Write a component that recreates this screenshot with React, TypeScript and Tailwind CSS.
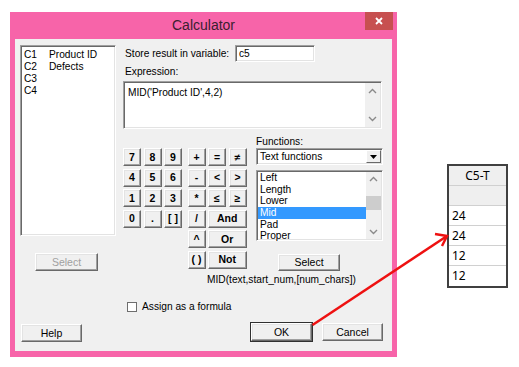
import React from "react";

const font = { fontFamily: '"Liberation Sans", Arial, sans-serif' };

function Btn({
  children,
  className = "",
  disabled = false,
}: {
  children?: React.ReactNode;
  className?: string;
  disabled?: boolean;
}) {
  return (
    <div
      className={
        "flex items-center justify-center bg-[#f0f0f0] border border-t-white border-l-white border-r-[#696969] border-b-[#696969] shadow-[inset_-1px_-1px_#a0a0a0,inset_1px_1px_#e3e3e3] text-[10.5px] leading-none whitespace-nowrap " +
        (disabled ? "text-[#a0a0a0] " : "text-black ") +
        className
      }
    >
      {children}
    </div>
  );
}

function Sunken({ className = "", children }: { className?: string; children?: React.ReactNode }) {
  return (
    <div
      className={
        "bg-white border border-t-[#a0a0a0] border-l-[#a0a0a0] border-r-white border-b-white shadow-[inset_1px_1px_#696969,inset_-1px_-1px_#e3e3e3] " +
        className
      }
    >
      {children}
    </div>
  );
}

function Chevron({ up }: { up?: boolean }) {
  return (
    <svg width="9" height="6" viewBox="0 0 9 6">
      <path
        d={up ? "M1 5 L4.5 1.5 L8 5" : "M1 1 L4.5 4.5 L8 1"}
        fill="none"
        stroke="#8a8a8a"
        strokeWidth="1.4"
      />
    </svg>
  );
}

export default function App() {
  const digits = ["7", "8", "9", "4", "5", "6", "1", "2", "3", "0", ".", "[ ]"];
  return (
    <div className="relative w-[519px] h-[367px] bg-white flex items-start overflow-hidden" style={font}>
      {/* Window */}
      <div className="ml-[10px] mt-[12px] w-[387px] h-[345px] bg-[#f764a9] flex flex-col">
        {/* Title bar */}
        <div className="h-[27px] flex items-start">
          <div className="w-[32px]" />
          <div className="flex-1 h-[27px] flex items-center justify-center text-[14px] text-[#3b2030]">
            Calculator
          </div>
          <div className="w-[28px] h-[18px] mr-[4px] bg-[#c75050] flex items-center justify-center">
            <svg width="8" height="8" viewBox="0 0 8 8">
              <path d="M1 1 L7 7 M7 1 L1 7" stroke="white" strokeWidth="1.8" />
            </svg>
          </div>
        </div>
        {/* Client */}
        <div className="mx-[5px] h-[312px] bg-[#f0f0f0] flex text-[10.2px] text-black whitespace-nowrap">
          {/* Left column */}
          <div className="ml-[5px] w-[96px] flex flex-col">
            <Sunken className="mt-[6px] h-[191px] pt-[3px] pl-[3px]">
              {[
                ["C1", "Product ID"],
                ["C2", "Defects"],
                ["C3", ""],
                ["C4", ""],
              ].map(([c, n]) => (
                <div key={c} className="flex h-[12px] leading-[12px]">
                  <span className="w-[25px]">{c}</span>
                  <span>{n}</span>
                </div>
              ))}
            </Sunken>
            <Btn disabled className="mt-[17px] ml-[15px] w-[63px] h-[18px]">
              Select
            </Btn>
            <Btn className="mt-[53px] ml-[1px] w-[61px] h-[18px]">Help</Btn>
          </div>

          {/* Right column */}
          <div className="ml-[7px] w-[262px] flex flex-col">
            <div className="mt-[6px] h-[17px] flex items-center">
              <div className="w-[112px] pl-[2px]">Store result in variable:</div>
              <Sunken className="w-[80px] h-[17px] pl-[3px] leading-[15px]">c5</Sunken>
            </div>
            <div className="mt-[3px] h-[14px] leading-[14px] pl-[2px]">Expression:</div>
            <Sunken className="mt-[2px] w-[259px] h-[48px] flex">
              <div className="flex-1 pl-[4px] pt-[4px] leading-[13px]">MID('Product ID',4,2)</div>
              <div className="w-[15px] mr-[1px] my-[1px] bg-[#f0f0f0] flex flex-col items-center justify-between py-[5px]">
                <Chevron up />
                <Chevron />
              </div>
            </Sunken>

            <div className="mt-[6px] flex">
              {/* Keypad */}
              <div className="w-[133px] pt-[13px] flex">
                <div className="grid grid-cols-[18px_18px_18px] gap-x-[2.5px] gap-y-[2.5px] auto-rows-[18px] content-start">
                  {digits.map((d) => (
                    <Btn key={d} className="w-[18px] h-[18px] font-bold text-[#222]">
                      {d}
                    </Btn>
                  ))}
                </div>
                <div className="ml-[5.5px] grid grid-cols-[18px_18px_18px] gap-x-[2.5px] gap-y-[2.5px] auto-rows-[18px] content-start">
                  <Btn className="font-bold">+</Btn>
                  <Btn className="font-bold">=</Btn>
                  <Btn className="font-bold">≠</Btn>
                  <Btn className="font-bold">-</Btn>
                  <Btn className="font-bold">&lt;</Btn>
                  <Btn className="font-bold">&gt;</Btn>
                  <Btn className="font-bold">*</Btn>
                  <Btn className="font-bold">≤</Btn>
                  <Btn className="font-bold">≥</Btn>
                  <Btn className="font-bold">/</Btn>
                  <Btn className="col-span-2 font-bold">And</Btn>
                  <Btn className="font-bold">^</Btn>
                  <Btn className="col-span-2 font-bold">Or</Btn>
                  <Btn className="font-bold">( )</Btn>
                  <Btn className="col-span-2 font-bold">Not</Btn>
                </div>
              </div>
              {/* Functions */}
              <div className="w-[127px] flex flex-col">
                <div className="h-[13px] leading-[13px]">Functions:</div>
                <Sunken className="h-[17px] flex items-center">
                  <div className="flex-1 pl-[3px] leading-[15px]">Text functions</div>
                  <div className="w-[15px] h-[13px] mr-[1px] flex items-center justify-center bg-[#f0f0f0] border border-t-white border-l-white border-r-[#696969] border-b-[#696969]">
                    <svg width="7" height="4" viewBox="0 0 7 4">
                      <path d="M0 0 L7 0 L3.5 4 Z" fill="black" />
                    </svg>
                  </div>
                </Sunken>
                <Sunken className="mt-[5px] h-[71px] flex">
                  <div className="flex-1 pt-[1px] pl-[1px]">
                    {["Left", "Length", "Lower", "Mid", "Pad", "Proper"].map((f) => (
                      <div
                        key={f}
                        className={
                          "h-[11.66px] leading-[11.66px] pl-[2px] " +
                          (f === "Mid" ? "bg-[#3399ff] text-white" : "")
                        }
                      >
                        {f}
                      </div>
                    ))}
                  </div>
                  <div className="w-[15px] mr-[1px] my-[1px] bg-[#f0f0f0] flex flex-col items-center">
                    <div className="h-[14px] flex items-center">
                      <Chevron up />
                    </div>
                    <div className="mt-[10px] w-[15px] h-[14px] bg-[#cdcdcd]" />
                    <div className="flex-1" />
                    <div className="h-[14px] flex items-center">
                      <Chevron />
                    </div>
                  </div>
                </Sunken>
                <Btn className="mt-[13px] ml-[22px] w-[62px] h-[17px]">Select</Btn>
              </div>
            </div>

            <div className="mt-[2px] ml-[84px] h-[13px] leading-[13px]">MID(text,start_num,[num_chars])</div>

            <div className="mt-[14px] ml-[4px] h-[13px] flex items-center">
              <div className="w-[10px] h-[10px] bg-white border border-[#6e6e6e]" />
              <div className="ml-[5px]">Assign as a formula</div>
            </div>

            <div className="mt-[10px] ml-[128px] flex gap-[10px]">
              <Btn className="w-[61px] h-[18px] outline outline-1 outline-[#303030]">OK</Btn>
              <Btn className="w-[61px] h-[18px]">Cancel</Btn>
            </div>
          </div>
        </div>
      </div>

      {/* Worksheet fragment */}
      <div
        className="ml-[50px] mt-[164px] w-[61px] border-2 border-[#404040] text-[12px] text-black"
        style={{ fontFamily: '"Noto Sans", "Open Sans", sans-serif' }}
      >
        <div className="h-[20px] bg-[#efefef] border-b border-[#d0d0d0] flex items-center justify-center">C5-T</div>
        <div className="h-[20px] bg-[#efefef] border-b border-[#d0d0d0]" />
        {["24", "24", "12", "12"].map((v, i) => (
          <div
            key={i}
            className={"h-[20px] bg-white flex items-center pl-[3px] " + (i < 3 ? "border-b border-[#d0d0d0]" : "")}
          >
            {v}
          </div>
        ))}
      </div>

      {/* Red arrow overlay */}
      <svg className="absolute inset-0 pointer-events-none" width="519" height="367" viewBox="0 0 519 367">
        <path d="M312.5 325 L447 236" stroke="#ee1111" strokeWidth="2.5" fill="none" />
        <path d="M435 234 L447 236 L442 246" stroke="#ee1111" strokeWidth="2.5" fill="none" />
      </svg>
    </div>
  );
}
